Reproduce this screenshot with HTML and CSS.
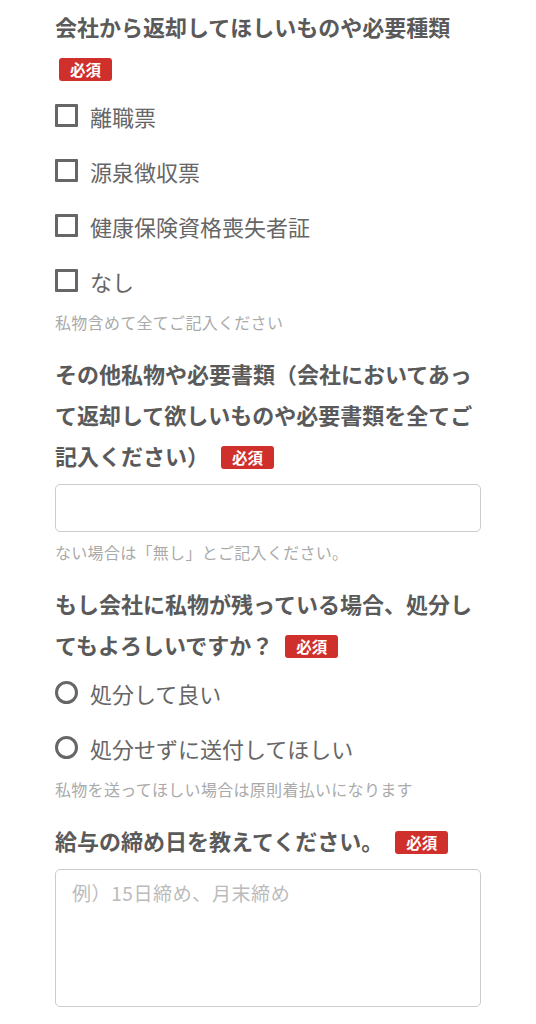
FILE: index.html
```html
<!DOCTYPE html>
<html lang="ja">
<head>
<meta charset="utf-8">
<title>フォーム</title>
<link rel="stylesheet" href="styles.css">
</head>
<body>
<form class="form">
  <div class="field field-first">
    <div class="title">会社から返却してほしいものや必要種類 <span class="badge badge-wrap">必須</span></div>
    <div class="options">
      <label class="option"><input type="checkbox" class="check"><span class="opt-text">離職票</span></label>
      <label class="option"><input type="checkbox" class="check"><span class="opt-text">源泉徴収票</span></label>
      <label class="option"><input type="checkbox" class="check"><span class="opt-text">健康保険資格喪失者証</span></label>
      <label class="option"><input type="checkbox" class="check"><span class="opt-text">なし</span></label>
    </div>
    <p class="hint">私物含めて全てご記入ください</p>
  </div>

  <div class="field">
    <div class="title">その他私物や必要書類（会社においてあって返却して欲しいものや必要書類を全てご記入ください）<span class="badge">必須</span></div>
    <input type="text" class="text-input">
    <p class="hint hint-input">ない場合は「無し」とご記入ください。</p>
  </div>

  <div class="field">
    <div class="title">もし会社に私物が残っている場合、処分してもよろしいですか？<span class="badge">必須</span></div>
    <div class="options">
      <label class="option"><input type="radio" name="dispose" class="radio"><span class="opt-text">処分して良い</span></label>
      <label class="option"><input type="radio" name="dispose" class="radio"><span class="opt-text">処分せずに送付してほしい</span></label>
    </div>
    <p class="hint">私物を送ってほしい場合は原則着払いになります</p>
  </div>

  <div class="field">
    <div class="title">給与の締め日を教えてください。<span class="badge">必須</span></div>
    <textarea class="text-area" placeholder="例）15日締め、月末締め"></textarea>
  </div>
</form>
</body>
</html>
```
FILE: styles.css
```css
* {
  box-sizing: border-box;
}

html, body {
  margin: 0;
  padding: 0;
  background: #ffffff;
}

body {
  font-family: "Noto Sans CJK JP", "Noto Sans", sans-serif;
  color: #595959;
}

.form {
  padding: 6px 55px 0;
}

.field {
  margin-top: 19px;
}

.field-first {
  margin-top: 0;
}

.title {
  font-size: 22px;
  font-weight: 700;
  line-height: 41px;
  color: #5a5a5a;
}

.badge {
  display: inline-block;
  vertical-align: middle;
  margin: -4px 0 0 12px;
  height: 23px;
  padding: 0 11px;
  border-radius: 3px;
  background: #d0302c;
  color: #ffffff;
  font-size: 15.5px;
  font-weight: 700;
  line-height: 23px;
}

.badge-wrap {
  margin-left: 4px;
}

.options {
  display: flex;
  flex-direction: column;
}

.option {
  display: flex;
  align-items: center;
  height: 55px;
  gap: 12px;
}

.check,
.radio {
  appearance: none;
  -webkit-appearance: none;
  margin: 0;
  width: 23px;
  height: 23px;
  flex: none;
  border: 3px solid #666666;
  background: #ffffff;
}

.check {
  border-radius: 1px;
}

.radio {
  border-radius: 50%;
}

.opt-text {
  font-size: 22px;
  line-height: 30px;
  color: #666666;
}

.hint {
  margin: 2px 0 0;
  font-size: 16px;
  letter-spacing: 0.3px;
  line-height: 24px;
  color: #aaaaaa;
}

.hint-input {
  margin-top: 8px;
}

.text-input {
  display: block;
  width: 100%;
  height: 48px;
  margin-top: 8px;
  border: 1.5px solid #cccccc;
  border-radius: 5px;
  background: #ffffff;
  font-family: inherit;
  font-size: 18px;
  padding: 0 16px;
}

.text-area {
  display: block;
  width: 100%;
  height: 138px;
  margin-top: 8px;
  border: 1.5px solid #cccccc;
  border-radius: 5px;
  background: #ffffff;
  font-family: inherit;
  font-size: 19px;
  letter-spacing: 0.6px;
  line-height: 26px;
  padding: 10px 16px;
  resize: none;
}

.text-area::placeholder {
  color: #bbbbbb;
}
```
